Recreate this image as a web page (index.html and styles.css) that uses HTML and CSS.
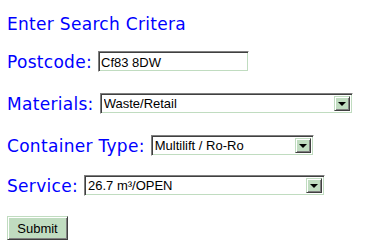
FILE: index.html
```html
<html>
    <head>
        <title>Enter Search Critera</title>
        <meta charset="UTF-8">
        <link rel="stylesheet" href="styles.css">
    </head>
    <body>
        <form class="search-form">
            <h1 class="title">Enter Search Critera</h1>
            <div class="row">
                <label for="postcode">Postcode:</label>
                <input id="postcode" class="text-box" type="text" value="Cf83 8DW">
            </div>
            <div class="row">
                <label for="materials">Materials:</label>
                <div class="combo combo-materials">
                    <select id="materials"><option>Waste/Retail</option></select>
                    <span class="drop-btn"><span class="arrow"></span></span>
                </div>
            </div>
            <div class="row row-container">
                <label for="container">Container Type:</label>
                <div class="combo combo-container">
                    <select id="container"><option>Multilift / Ro-Ro</option></select>
                    <span class="drop-btn"><span class="arrow"></span></span>
                </div>
            </div>
            <div class="row row-service">
                <label for="service">Service:</label>
                <div class="combo combo-service">
                    <select id="service"><option>26.7 m³/OPEN</option></select>
                    <span class="drop-btn"><span class="arrow"></span></span>
                </div>
            </div>
            <input class="submit-btn" type="submit" value="Submit">
        </form>
    </body>
</html>
```

FILE: styles.css
```css
body {
    margin: 0;
    background: #fff;
}

.search-form {
    display: flex;
    flex-direction: column;
    align-items: flex-start;
    padding: 14px 7px 0;
    font-family: "DejaVu Sans", Verdana, sans-serif;
}

.title {
    margin: 0 0 17px;
    font-size: 17px;
    letter-spacing: 0.3px;
    font-weight: normal;
    line-height: 20px;
    color: #0000ff;
}

.row {
    display: flex;
    align-items: center;
    gap: 6px;
    height: 21px;
    margin-bottom: 21px;
}

.row-container {
    margin-bottom: 19px;
}

.row-service {
    margin-bottom: 20px;
}

label {
    font-size: 17px;
    letter-spacing: 0.3px;
    line-height: 20px;
    color: #0000ff;
}

.text-box,
.combo {
    box-sizing: border-box;
    height: 21px;
    border: 1px solid;
    border-color: #808080 #ffffff #ffffff #808080;
    box-shadow: inset 1px 1px 0 #404040, inset -1px -1px 0 #c0dcc0;
    background: #fff;
}

.text-box {
    width: 151px;
    padding: 1px 2px 0;
    font-family: "Liberation Sans", Arial, sans-serif;
    font-size: 13px;
    color: #000;
    outline: none;
}

.combo {
    display: flex;
    padding: 2px;
}

.combo-materials { width: 253px; }
.combo-container { width: 163px; }
.combo-service { width: 241px; }

.combo select {
    flex: 1;
    appearance: none;
    -webkit-appearance: none;
    border: none;
    background: transparent;
    padding: 0 0 0 1px;
    margin: 0;
    font-family: "Liberation Sans", Arial, sans-serif;
    font-size: 13px;
    color: #000;
    outline: none;
}

.drop-btn {
    box-sizing: border-box;
    width: 16px;
    display: flex;
    align-items: center;
    justify-content: center;
    background: #c0dcc0;
    border: 1px solid;
    border-color: #c0dcc0 #404040 #404040 #c0dcc0;
    box-shadow: inset 1px 1px 0 #ffffff, inset -1px -1px 0 #808080;
}

.arrow {
    width: 0;
    height: 0;
    border-left: 4px solid transparent;
    border-right: 4px solid transparent;
    border-top: 4px solid #000;
    margin-top: 1px;
}

.submit-btn {
    box-sizing: border-box;
    width: 61px;
    height: 24px;
    margin: 0;
    padding: 0;
    font-family: "Liberation Sans", Arial, sans-serif;
    font-size: 13px;
    color: #000;
    background: #c0dcc0;
    border: 1px solid;
    border-color: #c0dcc0 #404040 #404040 #c0dcc0;
    box-shadow: inset 1px 1px 0 #ffffff, inset -1px -1px 0 #808080;
}
```
